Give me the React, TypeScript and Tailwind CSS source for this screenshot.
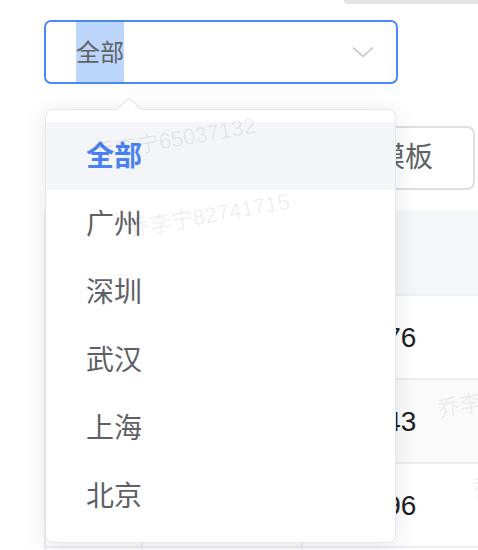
import React from "react";

const items = ["全部", "广州", "深圳", "武汉", "上海", "北京"];

const rows = [
  { a: "1", b: "乔李宁", c: "151376", striped: false },
  { a: "2", b: "乔李宁", c: "209843", striped: true },
  { a: "3", b: "乔李宁", c: "125696", striped: false },
];

const watermarks = [
  { left: 96, top: 143, text: "乔李宁65037132" },
  { left: 130, top: 219, text: "乔李宁82741715" },
  { left: 440, top: 399, text: "乔李宁65037132" },
  { left: 475, top: 478, text: "乔李宁82741715" },
];

export default function App() {
  return (
    <div
      className="relative w-full h-[550px] overflow-hidden bg-white"
      style={{ fontFamily: '"Liberation Sans", "Noto Sans CJK SC", sans-serif' }}
    >
      {/* top bar fragment */}
      <div className="flex justify-end">
        <div className="h-[4px] w-[134px] rounded-bl-[14px] bg-[#e3e4e7]" />
      </div>

      {/* select input */}
      <div className="ml-[44px] mt-[16px] flex h-[64px] w-[354px] items-center rounded-[7px] border-2 border-[#4c88f6] pl-[30px] pr-[22px]">
        <span className="flex h-[60px] items-center bg-[#bcd6fb] pt-[2px] text-[24px] text-[#606266]">
          全部
        </span>
        <div className="flex-1" />
        <svg width="22" height="12" viewBox="0 0 22 12" fill="none">
          <path d="M1 1.5 L11 10.5 L21 1.5" stroke="#c0c4cc" strokeWidth="1.6" />
        </svg>
      </div>

      {/* button row */}
      <div className="mt-[42px] flex justify-end pr-[3px]">
        <div className="flex h-[64px] items-center rounded-[8px] border-2 border-[#dcdfe6] px-[40px] text-[28px] text-[#606266]">
          下载模板
        </div>
      </div>

      {/* table */}
      <div className="ml-[44px] mt-[20px] w-[520px] border-l-2 border-[#ebeef5]">
        <div className="grid h-[86px] grid-cols-[97px_160px_1fr] bg-[#f5f6f8] border-b-2 border-[#ebeef5]">
          <div className="border-r-2 border-[#ebeef5]" />
          <div className="border-r-2 border-[#ebeef5]" />
          <div />
        </div>
        {rows.map((r, i) => (
          <div
            key={i}
            className={
              "grid h-[84px] grid-cols-[97px_160px_1fr] border-b-2 border-[#ebeef5] " +
              (r.striped ? "bg-[#fafafa]" : "bg-white")
            }
          >
            <div className="flex items-center border-r-2 border-[#ebeef5] px-[20px] text-[28px] text-[#303133]">
              {r.a}
            </div>
            <div className="flex items-center border-r-2 border-[#ebeef5] px-[20px] text-[28px] text-[#303133]">
              {r.b}
            </div>
            <div className="flex items-center px-[20px] pt-[2px] text-[28px] text-[#1f1f1f]">{r.c}</div>
          </div>
        ))}
        <div className="grid h-[84px] grid-cols-[97px_160px_1fr]">
          <div className="border-r-2 border-[#ebeef5]" />
          <div className="border-r-2 border-[#ebeef5]" />
          <div />
        </div>
      </div>

      {/* dropdown */}
      <div className="absolute left-[45px] top-[109px] z-10 w-[351px]">
        <svg
          className="absolute left-[71px] top-[-12px]"
          width="26"
          height="14"
          viewBox="0 0 26 14"
        >
          <path d="M0 13 L13 1 L26 13 Z" fill="#ffffff" />
          <path d="M0 13 L13 1 L26 13" fill="none" stroke="#e4e7ed" strokeWidth="1.2" />
        </svg>
        <div className="rounded-[8px] border border-[#e4e7ed] bg-white py-[12px] shadow-[0_4px_24px_rgba(0,0,0,0.1)]">
          {items.map((it, i) => (
            <div
              key={it}
              className={
                "flex h-[68px] items-center px-[40px] pt-[1px] text-[28px] " +
                (i === 0 ? "bg-[#f4f5f8] font-bold text-[#4a82f6]" : "text-[#5f6067]")
              }
            >
              {it}
            </div>
          ))}
        </div>
      </div>

      {/* watermarks */}
      <div className="pointer-events-none absolute inset-0 z-20">
        {watermarks.map((w, i) => (
          <span
            key={i}
            className="absolute origin-bottom-left rotate-[-10deg] whitespace-nowrap text-[22px] leading-none text-[rgba(0,0,0,0.08)]"
            style={{ left: w.left, top: w.top }}
          >
            {w.text}
          </span>
        ))}
      </div>
    </div>
  );
}
